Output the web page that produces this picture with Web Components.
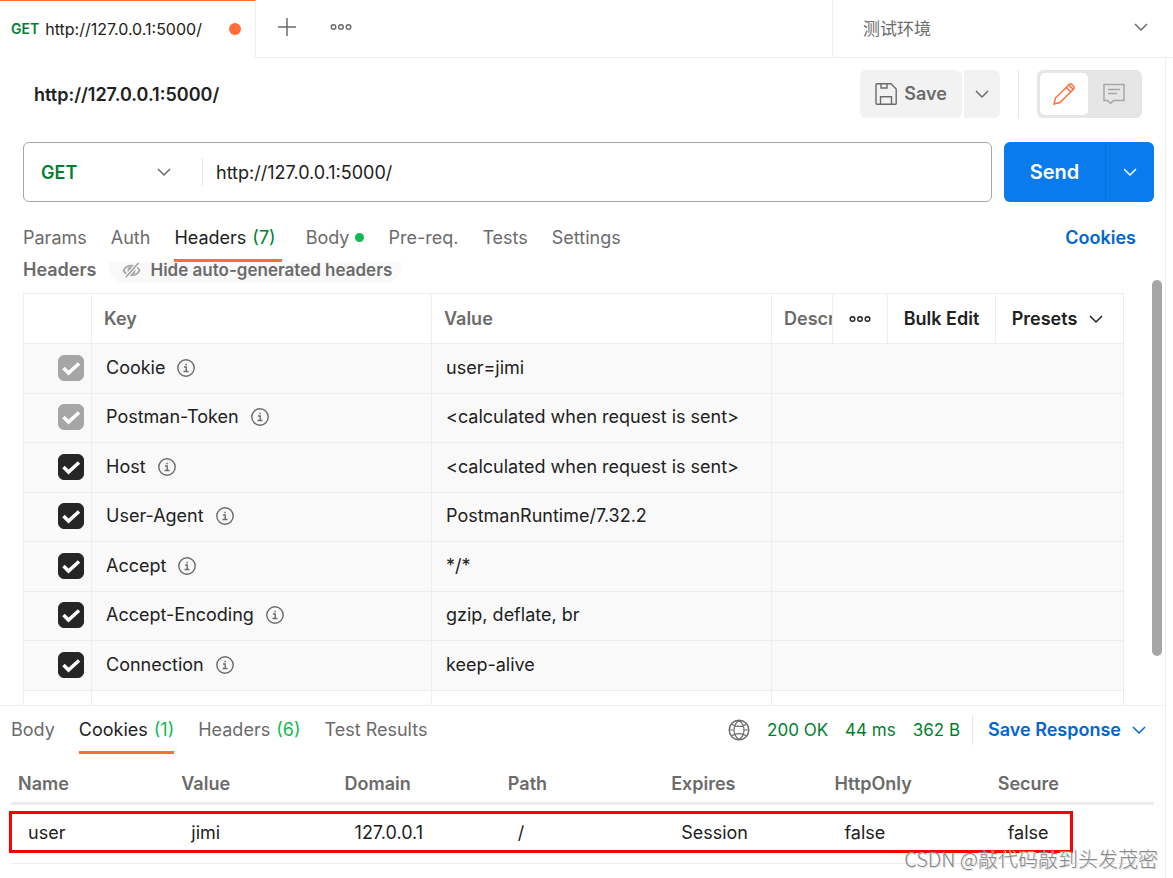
<!DOCTYPE html>
<html lang="en">
<head>
<meta charset="utf-8">
<title>http://127.0.0.1:5000/</title>
<style>
:root{--text:#212121;--muted:#6b6b6b;--green:#007f31;--bright:#0cbb52;--blue:#0265d2;--line:#ededed;--orange:#ff6c37}
html,body{height:100%;margin:0}
body{background:#fff;color:var(--text);font:400 18px/24px Inter,"Noto Sans CJK SC",sans-serif}
</style>
</head>
<body>
<api-client></api-client>
<script>
const base = `*{box-sizing:border-box}
button,input,select{font:inherit;color:inherit;margin:0;padding:0;border:0;background:none;white-space:nowrap}
a{color:inherit;text-decoration:none}
table{border-collapse:separate;border-spacing:0;table-layout:fixed;width:100%}
th{text-align:left;font-weight:600;color:var(--muted);padding:0}td{padding:0}`;

function define(name, css, html, setup) {
  const template = document.createElement('template');
  template.innerHTML = `<style>${base}${css}</style>${html}`;
  customElements.define(name, class extends HTMLElement {
    constructor() {
      super();
      this.attachShadow({ mode: 'open' }).append(template.content.cloneNode(true));
    }
    connectedCallback() { if (setup) setup(this, this.shadowRoot); }
  });
}

const icons = {
  chevron: [14, 14, '<path d="M1 4l6 6 6-6" stroke-width="1.5"/>'],
  plus: [18, 18, '<path d="M9 0v18M0 9h18" stroke-width="1.5"/>'],
  dots: [22, 8, '<circle cx="3.5" cy="4" r="2.3"/><circle cx="11" cy="4" r="2.3"/><circle cx="18.5" cy="4" r="2.3"/>'],
  save: [22, 22, '<path d="M1 1.5a.7.7 0 0 1 .7-.7H16l5.2 5.2v14.500a.7.7 0 0 1-.7.7H1.700a.7.7 0 0 1-.7-.7zM6 1v4h6V1M5.500 21v-7.300h11V21"/>'],
  pencil: [22, 22, '<path d="M1 21l1.500-6L15.600 1.900a2.700 2.700 0 0 1 3.800 0l.8.8a2.700 2.700 0 0 1 0 3.800L7 19.500zM13.200 4.300l4.500 4.500M15.700 1.900l4.500 4.500"/>'],
  comment: [22, 22, '<path d="M1 1.500h20v16h-10.500l-3 3-3-3H1zM5 6.500h12M5 10.500h9" stroke-width="1.500"/>'],
  info: [18, 18, '<circle cx="9" cy="9" r="8.200"/><path d="M7 8h2.200v4.500M6.500 12.500h5"/><path d="M8.300 5.500h1.500" stroke-width="1.700"/>'],
  hidden: [20, 16, '<path d="M1.500 8.500C3 5.500 6 3.500 9.500 3.500c3.600 0 6.500 2 8 5-1.500 3-4.500 4.700-8 4.700-3.500 0-6.500-1.700-8-4.700z" stroke-width="1.700"/><circle cx="9.500" cy="8.200" r="3.300" fill="currentColor"/><path d="M16.500 1L4 15" stroke="#f9f9f9" stroke-width="4"/><path d="M16.500 1L4 15" stroke-width="1.800"/>'],
  globe: [22, 22, '<circle cx="11" cy="11" r="9.800"/><path d="M11 1.200C4.300 6.500 4.300 15.500 11 20.800M11 1.200c6.700 5.300 6.700 14.300 0 19.600M3.500 5.200c4.500 2.600 10.500 2.600 15 0M3.500 16.800c4.500-2.600 10.500-2.600 15 0M1.200 11h4M16.500 11h4.300" stroke-width="1.200"/>']
};
define('ui-icon', ':host{display:inline-flex;flex:none}svg{display:block;fill:none;stroke:currentColor;stroke-width:1.4}', '<svg aria-hidden="true"></svg>', (el, root) => {
  const [w, h, art] = icons[el.getAttribute('name')];
  const svg = root.querySelector('svg');
  svg.setAttribute('width', w); svg.setAttribute('height', h);
  svg.setAttribute('viewBox', `0 0 ${w} ${h}`);
  svg.innerHTML = art;
});

define('tab-bar', `
:host{display:flex;height:58px}
.open{flex:none;width:256px;border-top:1px solid var(--orange);border-right:1px solid var(--line);display:flex;align-items:center;gap:6px;padding:0 14px 2px 11px}
.open a{flex:1;display:flex;align-items:center;gap:6px;font-size:16px}
.open b{font-size:14px;font-weight:600;color:var(--green)}
.dot{width:12px;height:12px;border-radius:50%;background:var(--orange)}
.rest{flex:1;display:flex;align-items:center;gap:34px;padding:0 22px 4px;border-bottom:1px solid var(--line);color:var(--muted)}
button{display:flex}
.env{flex:none;width:341px;border-left:1px solid var(--line);border-bottom:1px solid var(--line);position:relative;display:flex;align-items:center;color:var(--muted)}
select{appearance:none;width:100%;height:100%;padding:0 30px;font-size:17px}
.env ui-icon{position:absolute;right:25px;top:20px;pointer-events:none}`,
`<div class="open"><a href="#request"><b>GET</b><span>http://127.0.0.1:5000/</span></a><span class="dot"></span></div>
<div class="rest"><button aria-label="New tab"><ui-icon name="plus"></ui-icon></button><button aria-label="Tab options"><ui-icon name="dots"></ui-icon></button></div>
<div class="env"><select aria-label="Environment"><option>测试环境</option></select><ui-icon name="chevron"></ui-icon></div>`);

define('request-title', `
:host{display:flex;align-items:center;height:48px;padding:0 23px 0 34px}
h1{flex:1;margin:0;padding-top:2px;font-size:18px;line-height:24px;font-weight:600}
button{display:flex;align-items:center;justify-content:center;height:48px;background:#f2f2f2;color:var(--muted);font-weight:600}
.save{width:102px;gap:7px;border-radius:6px;margin-right:2px}
.more{width:36px;border-radius:0 6px 6px 0}
.rule{width:1px;height:48px;background:#e6e6e6;margin:0 18px}
.mode{display:flex;width:105px;padding:3px;background:#e6e6e6;border-radius:6px}
.mode button{flex:1;height:42px;background:none;color:#a6a6a6;border-radius:5px}
.mode .on{flex:none;width:48px;background:#fff;color:var(--orange)}`,
`<h1>http://127.0.0.1:5000/</h1><button class="save"><ui-icon name="save"></ui-icon>Save</button><button class="more" aria-label="Save options"><ui-icon name="chevron"></ui-icon></button>
<span class="rule"></span><div class="mode"><button class="on" aria-label="Edit"><ui-icon name="pencil"></ui-icon></button><button aria-label="Comments"><ui-icon name="comment"></ui-icon></button></div>`);

define('request-bar', `
:host{display:flex;gap:12px;height:60px;padding:0 11px 0 23px}
.box{flex:1;min-width:0;display:flex;align-items:center;border:1px solid #a6a6a6;border-radius:6px}
.method{position:relative;width:178px;flex:none;color:var(--green)}
select{appearance:none;width:100%;height:40px;padding:2px 0 0 17px;font-weight:600}
.method ui-icon{position:absolute;right:31px;top:13px;color:var(--muted);pointer-events:none}
input{flex:1;min-width:0;height:28px;border-left:1px solid #e6e6e6;padding:0 13px;outline:0}
.send{display:flex;flex:none;width:150px;border-radius:6px;background:#097bed;color:#fff;overflow:hidden}
.send button{flex:1;font-size:20px;font-weight:600}
.send .more{flex:none;width:49px;border-left:1px solid #0a6fd6}`,
`<div class="box"><div class="method"><select aria-label="Method"><option>GET</option></select><ui-icon name="chevron"></ui-icon></div><input aria-label="Request URL" value="http://127.0.0.1:5000/"></div>
<div class="send"><button>Send</button><button class="more" aria-label="Send options"><ui-icon name="chevron"></ui-icon></button></div>`);

define('tab-item', `
:host{display:flex;height:100%;color:var(--muted)}
:host([active]){color:var(--text)}
button{display:flex;align-items:center;gap:6px;padding-top:2px;border-bottom:3px solid transparent}
:host([active]) button{border-color:var(--orange)}
:host([room]) button{padding-right:6px}`,
`<button><slot></slot><slot name="extra"></slot></button>`);

define('headers-table', `
:host{display:block;border:1px solid var(--line);border-bottom:0}
.check{width:67px}.col{width:340px}
th,td{height:50px;border-bottom:1px solid var(--line)}
tr:nth-child(even) td{height:49px}
th+th,td+td{border-left:1px solid var(--line)}
th+th{padding-left:12px}td+td{padding-left:14px}
tbody tr:not(.new){background:#f9f9f9}
tbody tr:nth-child(odd) td{padding-bottom:1px}
tbody tr:nth-child(even) td{padding-bottom:2px}
td:first-child{padding-left:34px}
td input{appearance:none;display:block;width:26px;height:26px;border-radius:6px;background:#262626;border:1px solid #262626}
td input:checked{background:#262626 url('data:image/svg+xml,<svg xmlns="http://www.w3.org/2000/svg" width="24" height="24"><path d="M4.500 12l5 5L20 7.500" fill="none" stroke="white" stroke-width="3.500"/></svg>') center no-repeat}
td input:disabled{background-color:#a6a6a6;border-color:#a6a6a6}
.key{display:flex;align-items:center;gap:12px}
.key button{display:flex;color:var(--muted)}
.tools{display:flex;align-items:stretch;height:49px}
.name{flex:1;overflow:hidden;min-width:0;line-height:49px}
.tools button{flex:none;border-left:1px solid var(--line);color:var(--text);font-weight:600;display:flex;align-items:center;justify-content:center;gap:12px}
.dots{width:55px}.bulk{width:108px}.presets{width:128px;padding-right:4px}`,
`<table><colgroup><col class="check"><col class="col"><col class="col"><col></colgroup>
<thead><tr><th></th><th>Key</th><th>Value</th><th><div class="tools"><span class="name">Description</span><button class="dots" aria-label="Columns"><ui-icon name="dots"></ui-icon></button><button class="bulk">Bulk Edit</button><button class="presets">Presets<ui-icon name="chevron"></ui-icon></button></div></th></tr></thead><tbody></tbody></table>`,
(el, root) => {
  const rows = [['Cookie', 'user=jimi', 1], ['Postman-Token', '<calculated when request is sent>', 1], ['Host', '<calculated when request is sent>'], ['User-Agent', 'PostmanRuntime/7.32.2'], ['Accept', '*/*'], ['Accept-Encoding', 'gzip, deflate, br'], ['Connection', 'keep-alive']];
  root.querySelector('tbody').innerHTML = rows.map(([k, v, off]) => `<tr><td><input type="checkbox" checked ${off ? 'disabled' : ''} aria-label="${k}"></td><td><div class="key">${k}<button aria-label="About ${k}"><ui-icon name="info"></ui-icon></button></div></td><td>${v.replace('<', '&lt;')}</td><td></td></tr>`).join('') + '<tr class="new"><td></td><td></td><td></td><td></td></tr>';
});

define('cookie-table', `
:host{display:block;padding:0 11px;position:relative}
th{height:40px;padding:0 7px;border-bottom:3px solid var(--line)}
td{height:59px;padding:0 17px 3px;border-bottom:1px solid var(--line)}
.mark{position:absolute;left:9px;right:92px;top:46px;height:42px;border:3px solid #f00}`,
`<table><thead><tr><th>Name</th><th>Value</th><th>Domain</th><th>Path</th><th>Expires</th><th>HttpOnly</th><th>Secure</th></tr></thead>
<tbody><tr><td>user</td><td>jimi</td><td>127.0.0.1</td><td>/</td><td>Session</td><td>false</td><td>false</td></tr></tbody></table><div class="mark"></div>`);

define('request-panel', `
:host{flex:1;min-height:0;display:flex;flex-direction:column;padding-top:12px}
request-bar{margin-top:24px}
nav{flex:none;display:flex;gap:24px;height:48px;margin-top:12px;padding:0 29px 0 23px}
nav a{margin-left:auto;align-self:center;color:var(--blue);font-weight:600}
.dot{width:9px;height:9px;border-radius:50%;background:var(--bright)}
.count{color:var(--green)}
.view{flex:1;min-height:0;position:relative;overflow:hidden;margin-top:-6px;padding:6px 41px 0 23px}
.bar{display:flex;gap:12px;height:21px;color:var(--muted);font-weight:600;line-height:16px}
.bar button{display:flex;align-items:center;gap:9px;height:21px;padding:0 9px 6px 13px;border-radius:0 0 16px 16px;background:#f9f9f9;font-size:17px}
.bar ui-icon{color:#a6a6a6}
headers-table{margin-top:10px}
.thumb{position:absolute;right:3px;top:24px;bottom:49px;width:10px;border-radius:5px;background:#a6a6a6}`,
`<request-title></request-title><request-bar></request-bar>
<nav><tab-item>Params</tab-item><tab-item>Auth</tab-item><tab-item active room>Headers<span slot="extra" class="count">(7)</span></tab-item><tab-item>Body<span slot="extra" class="dot"></span></tab-item><tab-item>Pre-req.</tab-item><tab-item>Tests</tab-item><tab-item>Settings</tab-item><a href="#cookies">Cookies</a></nav>
<div class="view"><div class="bar">Headers<button><ui-icon name="hidden"></ui-icon>Hide auto-generated headers</button></div><headers-table></headers-table><div class="thumb"></div></div>`);

define('response-panel', `
:host{flex:none;display:block;height:173px;border-top:1px solid var(--line)}
nav{display:flex;gap:24px;height:48px;padding:0 11px}
.count{color:var(--bright)}
.status{margin-left:auto;display:flex;align-items:center;gap:17px;color:var(--green);font-size:17px}
.status ui-icon{color:var(--muted)}
.status button{display:flex;align-items:center;gap:11px;margin-left:-5px;height:30px;padding:0 8px 0 15px;border-left:1px solid #e6e6e6;color:var(--blue);font-weight:600;font-size:18px}
.status button ui-icon{color:var(--blue)}
cookie-table{margin-top:11px}`,
`<nav><tab-item>Body</tab-item><tab-item active>Cookies<span slot="extra" class="count">(1)</span></tab-item><tab-item>Headers<span slot="extra" class="count">(6)</span></tab-item><tab-item>Test Results</tab-item>
<div class="status"><ui-icon name="globe"></ui-icon><span>200 OK</span><span>44 ms</span><span>362 B</span><button>Save Response<ui-icon name="chevron"></ui-icon></button></div></nav><cookie-table></cookie-table>`);

define('api-client', `
:host{display:flex;flex-direction:column;height:100vh;position:relative;overflow:hidden}
tab-bar{flex:none}
main{flex:1;min-height:0;display:flex;flex-direction:column;margin-right:7px;border-right:1px solid var(--line)}
.credit{position:absolute;right:15px;bottom:5px;font:300 20px/28px "Noto Sans CJK SC",sans-serif;color:#888;text-shadow:1px 1px 0 #ddd}`,
`<tab-bar></tab-bar><main><request-panel></request-panel><response-panel></response-panel></main><span class="credit">CSDN @敲代码敲到头发茂密</span>`);
</script>
</body>
</html>
